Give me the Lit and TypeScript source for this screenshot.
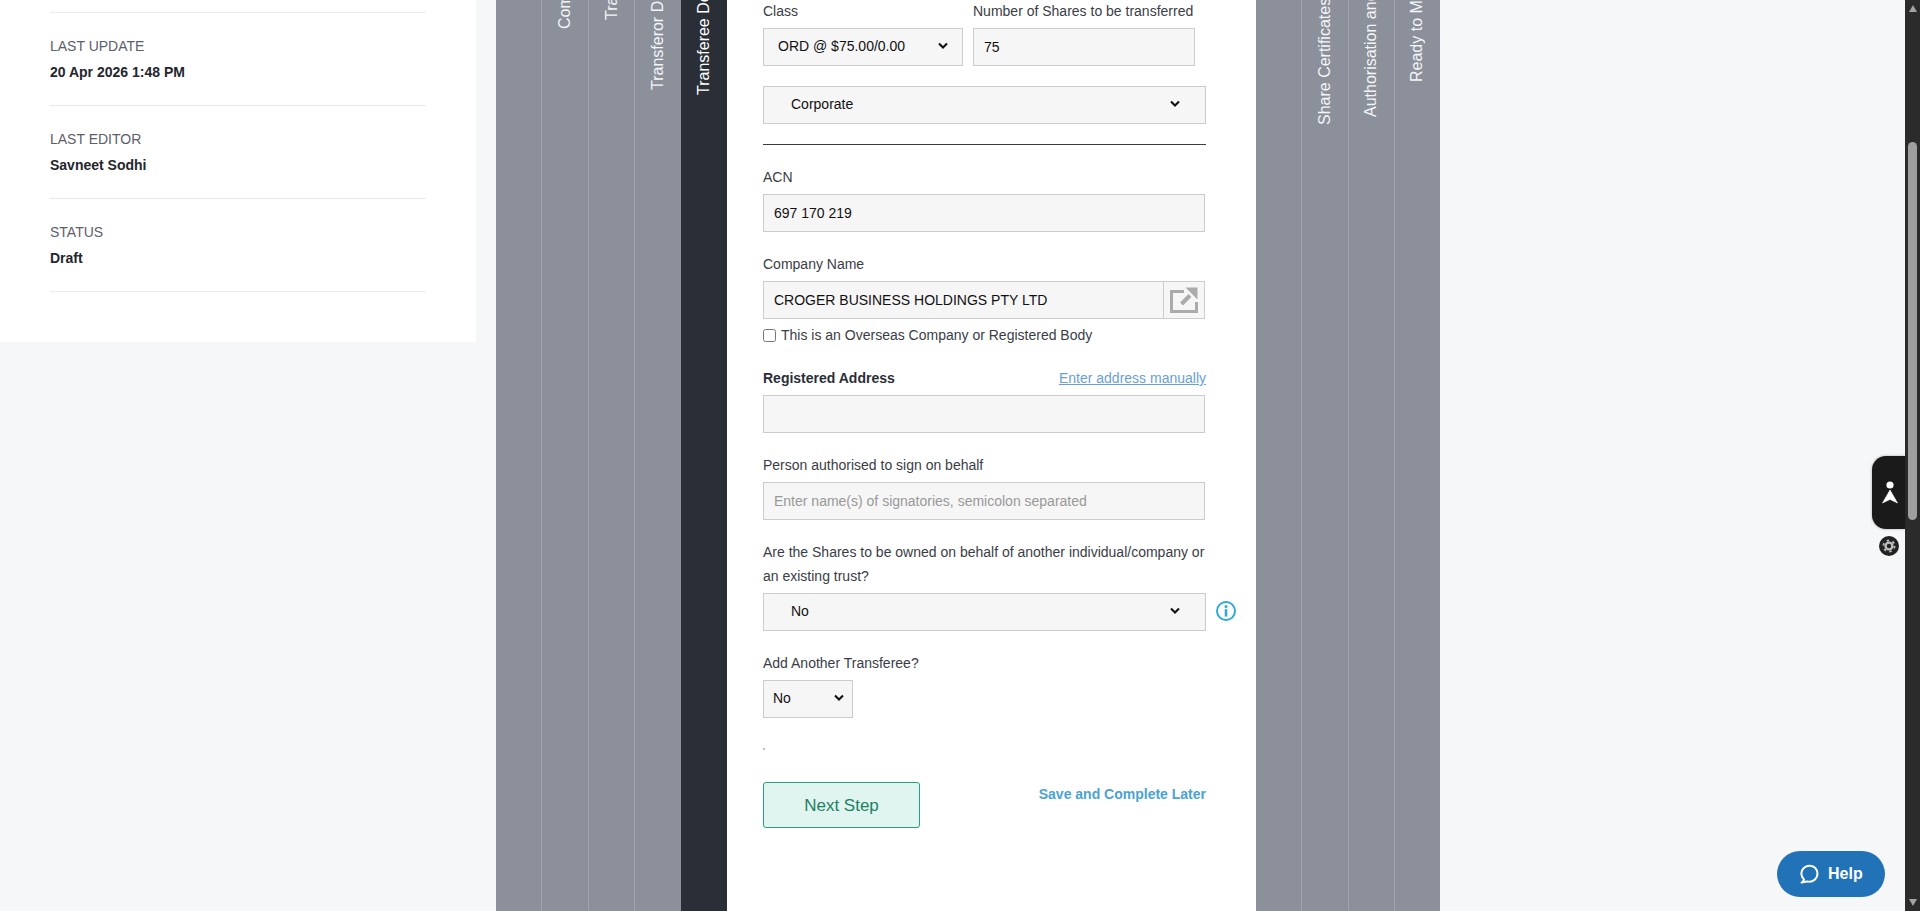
import { LitElement, html, css } from "lit";
import { customElement } from "lit/decorators.js";

const LEFT_TABS = [
  { label: "", bottom: 0, active: false },
  { label: "Company Details", bottom: 29, active: false },
  { label: "Transfer Details", bottom: 20, active: false },
  { label: "Transferor Details", bottom: 90, active: false },
  { label: "Transferee Details", bottom: 95, active: true },
];
const RIGHT_TABS = [
  { label: "", bottom: 0, active: false },
  { label: "Share Certificates", bottom: 125, active: false },
  { label: "Authorisation and Signing", bottom: 117, active: false },
  { label: "Ready to Merge", bottom: 82, active: false },
];
const META = [
  { k: "LAST UPDATE", v: "20 Apr 2026 1:48 PM" },
  { k: "LAST EDITOR", v: "Savneet Sodhi" },
  { k: "STATUS", v: "Draft" },
];

@customElement("app-root")
export class AppRoot extends LitElement {
  static styles = css`
    :host {
      display: block;
      height: 911px;
      overflow: hidden;
      position: relative;
      background: #f5f7f9;
      font-family: "Liberation Sans", Arial, sans-serif;
      font-size: 14px;
      color: #3a3d45;
    }
    .page { display: flex; height: 911px; }
    .main { flex: 1; display: flex; gap: 20px; min-width: 0; }
    .side { width: 476px; flex: none; align-self: flex-start; background: #fff; padding-bottom: 50px; }
    .side-top { height: 12px; margin: 0 50px; border-bottom: 1px solid #e9eaec; }
    .meta { margin: 0 50px; padding: 21px 0 23px; border-bottom: 1px solid #e9eaec; }
    .meta-k { line-height: 24px; color: #5c606a; }
    .meta-v { line-height: 20px; margin-top: 4px; font-weight: 700; color: #23262d; }
    .wizard { display: flex; width: 944px; flex: none; height: 911px; background: #fff; }
    .tabs { display: flex; height: 100%; background: #8b909b; }
    .tabs.left { width: 231px; }
    .tabs.right { width: 184px; }
    .tab {
      flex: 1;
      display: flex;
      justify-content: center;
      align-items: flex-start;
      border-left: 1px solid #a0a4ad;
      color: #f4f5f7;
      font-size: 16px;
      overflow: hidden;
      min-width: 0;
    }
    .tab:first-child { border-left: 0; }
    .tab.active { background: #2a2e37; border-left-color: #2a2e37; color: #fff; }
    .tab-label {
      writing-mode: vertical-rl;
      transform: rotate(180deg);
      white-space: nowrap;
      line-height: 20px;
    }
    .panel { width: 529px; flex: none; padding-left: 36px; box-sizing: border-box; }
    .form { width: 443px; margin-top: -1px; display: flex; flex-direction: column; }
    .lbl { display: block; line-height: 24px; margin-bottom: 5px; color: #3a3d45; }
    .row { display: flex; gap: 10px; }
    .group { margin-top: 20px; }
    select, input[type="text"] {
      box-sizing: border-box;
      height: 38px;
      border: 1px solid #cccccc;
      border-radius: 0;
      background-color: #f6f6f6;
      font: 14px "Liberation Sans", Arial, sans-serif;
      color: #111;
      outline: none;
      margin: 0;
      display: block;
    }
    select {
      appearance: none;
      -webkit-appearance: none;
      padding-top: 0;
      padding-bottom: 2px;
      background-image: url("data:image/svg+xml,%3Csvg xmlns='http://www.w3.org/2000/svg' width='10' height='8' viewBox='0 0 10 8'%3E%3Cpath d='M1 1.6L5 5.6L9 1.6' fill='none' stroke='%23111' stroke-width='2.1'/%3E%3C/svg%3E");
      background-repeat: no-repeat;
      background-size: 10px 8px;
    }
    input[type="text"] { padding: 0 10px; width: 442px; }
    input::placeholder { color: #999; opacity: 1; }
    .sel-class { width: 200px; padding-left: 14px; padding-right: 24px; background-position: right 14px top 13px; }
    .sel-wide { width: 443px; padding-left: 27px; padding-right: 40px; background-position: right 25px top 13px; }
    .sel-small { width: 90px; padding-left: 9px; padding-right: 18px; background-position: right 8px top 13px; }
    .num { width: 222px !important; }
    .rule { height: 1px; background: #3a3d45; margin-top: 20px; }
    .lookup { display: flex; width: 442px; height: 38px; }
    .lookup input { flex: 1; width: auto; min-width: 0; border-right: 0; }
    .lookup-btn {
      flex: none;
      width: 42px;
      box-sizing: border-box;
      border: 1px solid #cccccc;
      background: #f6f6f6;
      display: flex;
      align-items: center;
      justify-content: center;
    }
    .check { display: flex; align-items: center; gap: 5px; height: 16px; margin-top: 8px; }
    .check input { margin: 0; width: 13px; height: 13px; flex: none; }
    .check span { line-height: 16px; }
    .addr-head { display: flex; justify-content: space-between; margin-top: 23px; margin-bottom: 5px; line-height: 24px; }
    .addr-head b { color: #2b2e36; font-weight: 700; }
    .addr-head a { color: #6a9fd4; text-decoration: underline; }
    .q { line-height: 24px; margin-bottom: 5px; }
    .info-row { display: flex; align-items: center; gap: 10px; width: 473px; }
    .info-row select { flex: none; }
    .info-row svg { flex: none; margin-top: -2px; }
    .dot { width: 2px; height: 2px; background: #bdbdbd; margin: 30px 0 32px; }
    .actions { display: flex; justify-content: space-between; align-items: flex-start; }
    .next {
      box-sizing: border-box;
      width: 157px;
      height: 46px;
      border: 1px solid #2a9d83;
      border-radius: 3px;
      background: #e0f5ef;
      color: #1f8065;
      font: 17px "Liberation Sans", Arial, sans-serif;
      padding: 1px 0 0;
    }
    .save { color: #4ba3d3; font-weight: 700; line-height: 20px; margin-top: 2px; text-decoration: none; }
    .scrollbar { width: 15px; flex: none; background: #2b2b2b; display: flex; flex-direction: column; align-items: center; }
    .arrow-up { width: 0; height: 0; border: 4.5px solid transparent; border-top: 0; border-bottom: 7px solid #a3a3a3; margin-top: 5px; }
    .thumb { width: 9px; height: 378px; margin-top: 130px; background: #9f9f9f; border-radius: 5px; }
    .arrow-down { width: 0; height: 0; border: 4.5px solid transparent; border-bottom: 0; border-top: 7px solid #a3a3a3; margin-top: auto; margin-bottom: 5px; }
    .access {
      position: absolute;
      left: 1872px;
      top: 456px;
      width: 33px;
      height: 73px;
      background: #1a1a1a;
      border-radius: 14px 0 0 14px;
      display: flex;
      align-items: center;
      justify-content: center;
      padding-left: 3px;
      box-sizing: border-box;
      box-shadow: 0 0 3px rgba(0, 0, 0, 0.3);
    }
    .gear {
      position: absolute;
      left: 1879px;
      top: 536px;
      width: 20px;
      height: 20px;
      border-radius: 50%;
      background: #222;
      display: flex;
      align-items: center;
      justify-content: center;
    }
    .help {
      position: absolute;
      left: 1777px;
      top: 851px;
      width: 108px;
      height: 46px;
      border-radius: 23px;
      background: #2272b8;
      color: #fff;
      font-weight: 700;
      font-size: 16px;
      display: flex;
      align-items: center;
      gap: 9px;
      padding-left: 22px;
      box-sizing: border-box;
    }
  `;

  private renderTabs(tabs: typeof LEFT_TABS, side: string) {
    return html`<div class="tabs ${side}">
      ${tabs.map(
        (t) => html`<div class="tab ${t.active ? "active" : ""}">
          ${t.label
            ? html`<div class="tab-label" style="height:${t.bottom}px">${t.label}</div>`
            : ""}
        </div>`
      )}
    </div>`;
  }

  render() {
    return html`
      <div class="page">
        <div class="main">
          <aside class="side">
            <div class="side-top"></div>
            ${META.map(
              (m) => html`<div class="meta">
                <div class="meta-k">${m.k}</div>
                <div class="meta-v">${m.v}</div>
              </div>`
            )}
          </aside>
          <div class="wizard">
            ${this.renderTabs(LEFT_TABS, "left")}
            <div class="panel">
              <div class="form">
                <div class="row">
                  <div>
                    <div class="lbl">Class</div>
                    <select class="sel-class"><option>ORD @ $75.00/0.00</option></select>
                  </div>
                  <div>
                    <div class="lbl">Number of Shares to be transferred</div>
                    <input type="text" class="num" .value=${"75"} />
                  </div>
                </div>
                <div class="group">
                  <select class="sel-wide"><option>Corporate</option></select>
                </div>
                <div class="rule"></div>
                <div class="group">
                  <div class="lbl">ACN</div>
                  <input type="text" .value=${"697 170 219"} />
                </div>
                <div class="group">
                  <div class="lbl">Company Name</div>
                  <div class="lookup">
                    <input type="text" .value=${"CROGER BUSINESS HOLDINGS PTY LTD"} />
                    <div class="lookup-btn">
                      <svg width="28" height="26" viewBox="0 0 28 26">
                        <path d="M14 4.5H1.5V24.5H26.5V15" fill="none" stroke="#ababab" stroke-width="3" />
                        <path d="M11.5 17L20 8.5" fill="none" stroke="#ababab" stroke-width="4" />
                        <path d="M15.5 0.5H27.5V12.5Z" fill="#ababab" />
                      </svg>
                    </div>
                  </div>
                </div>
                <div class="check">
                  <input type="checkbox" />
                  <span>This is an Overseas Company or Registered Body</span>
                </div>
                <div class="addr-head">
                  <b>Registered Address</b>
                  <a href="#">Enter address manually</a>
                </div>
                <input type="text" />
                <div class="group">
                  <div class="lbl">Person authorised to sign on behalf</div>
                  <input type="text" placeholder="Enter name(s) of signatories, semicolon separated" />
                </div>
                <div class="group">
                  <div class="q">Are the Shares to be owned on behalf of another individual/company or an existing trust?</div>
                  <div class="info-row">
                    <select class="sel-wide"><option>No</option></select>
                    <svg width="20" height="20" viewBox="0 0 20 20">
                      <circle cx="10" cy="10" r="9" fill="none" stroke="#2fa9d8" stroke-width="2" />
                      <circle cx="10" cy="5.6" r="1.5" fill="#2fa9d8" />
                      <rect x="8.7" y="8.2" width="2.6" height="7.4" fill="#2fa9d8" />
                    </svg>
                  </div>
                </div>
                <div class="group">
                  <div class="lbl">Add Another Transferee?</div>
                  <select class="sel-small"><option>No</option></select>
                </div>
                <div class="dot"></div>
                <div class="actions">
                  <button class="next">Next Step</button>
                  <a class="save" href="#">Save and Complete Later</a>
                </div>
              </div>
            </div>
            ${this.renderTabs(RIGHT_TABS, "right")}
          </div>
        </div>
        <div class="scrollbar">
          <div class="arrow-up"></div>
          <div class="thumb"></div>
          <div class="arrow-down"></div>
        </div>
      </div>
      <div class="access">
        <svg width="16" height="24" viewBox="0 0 16 24">
          <circle cx="8" cy="4" r="3.6" fill="#fff" />
          <path d="M8 9L15.5 22L8 18.4L0.5 22Z" fill="#fff" stroke="#fff" stroke-width="0.6" stroke-linejoin="round" />
        </svg>
      </div>
      <div class="gear">
        <svg width="14" height="14" viewBox="0 0 14 14">
          <circle cx="7" cy="7" r="3.4" fill="none" stroke="#bdbdbd" stroke-width="2.4" />
          <circle cx="7" cy="7" r="5.6" fill="none" stroke="#bdbdbd" stroke-width="1.8" stroke-dasharray="2.4 3.46" />
        </svg>
      </div>
      <div class="help">
        <svg width="20" height="20" viewBox="0 0 20 20">
          <path d="M5 15.6A8 8 0 1 1 8.2 17.4L2.6 18.6C3.8 17.8 4.6 16.8 5 15.6Z" fill="none" stroke="#fff" stroke-width="2" stroke-linejoin="round" />
        </svg>
        <span>Help</span>
      </div>
    `;
  }
}
